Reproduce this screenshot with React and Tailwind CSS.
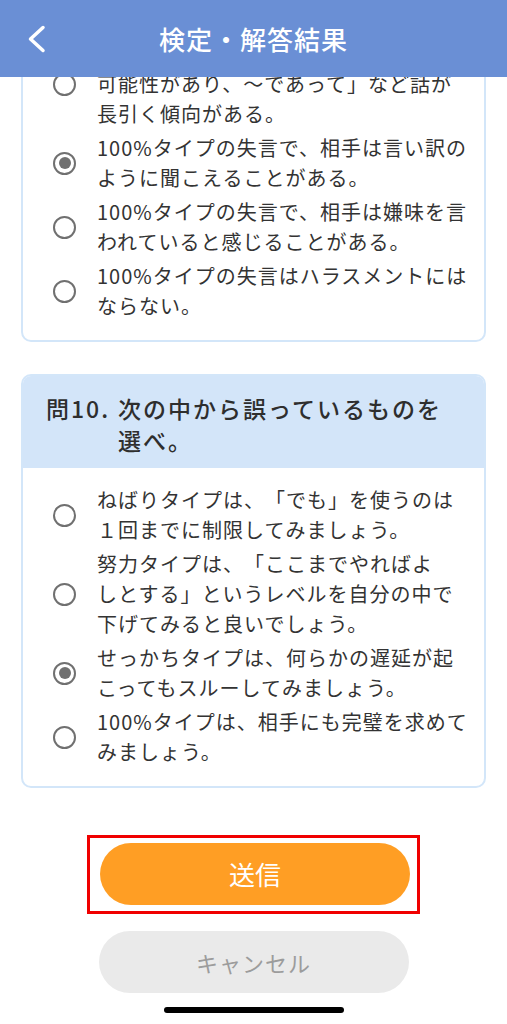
import React from "react";

// Quiz result screen: two question cards (first one scrolled under the header)
// followed by the send / cancel buttons.

const PREV_OPTIONS = [
  {
    lines: ["100%タイプの失言は、「～という", "可能性があり、～であって」など話が", "長引く傾向がある。"],
    checked: false,
  },
  {
    lines: ["100%タイプの失言で、相手は言い訳の", "ように聞こえることがある。"],
    checked: true,
  },
  {
    lines: ["100%タイプの失言で、相手は嫌味を言", "われていると感じることがある。"],
    checked: false,
  },
  {
    lines: ["100%タイプの失言はハラスメントには", "ならない。"],
    checked: false,
  },
];

const Q10_OPTIONS = [
  {
    lines: ["ねばりタイプは、「でも」を使うのは", "１回までに制限してみましょう。"],
    checked: false,
  },
  {
    lines: ["努力タイプは、「ここまでやればよ", "しとする」というレベルを自分の中で", "下げてみると良いでしょう。"],
    checked: false,
  },
  {
    lines: ["せっかちタイプは、何らかの遅延が起", "こってもスルーしてみましょう。"],
    checked: true,
  },
  {
    lines: ["100%タイプは、相手にも完璧を求めて", "みましょう。"],
    checked: false,
  },
];

function Radio({ checked }) {
  return (
    <span className="w-[23px] h-[23px] shrink-0 rounded-full border-[2.5px] border-[#707070] flex items-center justify-center">
      {checked && <span className="w-[12px] h-[12px] rounded-full bg-[#707070]" />}
    </span>
  );
}

function OptionList({ options }) {
  return (
    <div className="flex flex-col gap-[4px] pt-[17px] pb-[19px]">
      {options.map((opt, i) => (
        <label key={i} className="flex items-center pl-[30px] pr-[8px] gap-[21px]">
          <Radio checked={opt.checked} />
          <span className="flex flex-col text-[20px] leading-[30px] tracking-[1px] text-[#333333]">
            {opt.lines.map((line, j) => (
              <span key={j} className="whitespace-nowrap">{line}</span>
            ))}
          </span>
        </label>
      ))}
    </div>
  );
}

export default function App() {
  return (
    <div className="h-[1024px] w-full bg-white overflow-hidden flex flex-col font-['Noto_Sans_CJK_JP','Noto_Sans',sans-serif] [text-spacing-trim:space-all]">

      {/* ── HEADER ── */}
      <header className="relative z-10 h-[77px] shrink-0 bg-[#6a8fd5] grid grid-cols-[60px_1fr_60px] items-center">
        <div className="pl-[27px] pt-[1px] flex items-center">
          <svg width="20" height="28" viewBox="0 0 20 28" fill="none">
            <polyline
              points="16,2.5 3.5,14 16,25.5"
              stroke="white"
              strokeWidth="3.5"
              strokeLinecap="round"
              strokeLinejoin="round"
            />
          </svg>
        </div>
        <h1 className="text-center text-white text-[26px] font-medium tracking-[1px] leading-none">
          検定・解答結果
        </h1>
        <div />
      </header>

      {/* ── CONTENT (scrolled, first card partly under the header) ── */}
      <main className="flex-1 -mt-[57px] flex flex-col">

        {/* previous question — only the options are visible */}
        <section className="mx-[21px] rounded-[10px] border-2 border-[#d3e6f9] bg-white">
          <OptionList options={PREV_OPTIONS} />
        </section>

        {/* question 10 */}
        <section className="mx-[21px] mt-[32px] rounded-[10px] border-2 border-[#d3e6f9] bg-white overflow-hidden">
          <div className="bg-[#d3e5f9] pl-[23px] pr-[8px] pt-[16px] pb-[12px] flex gap-[8px] text-[23px] leading-[32px] tracking-[2px] font-medium text-[#2e2e2e]">
            <span className="whitespace-nowrap">問10.</span>
            <span className="flex flex-col">
              <span className="whitespace-nowrap">次の中から誤っているものを</span>
              <span className="whitespace-nowrap">選べ。</span>
            </span>
          </div>
          <OptionList options={Q10_OPTIONS} />
        </section>

        {/* ── BUTTONS ── */}
        <div className="flex flex-col items-center mt-[47px]">
          <div className="w-[333px] border-[3px] border-[#f00000] pt-[5px] pb-[6px] pl-[10px] pr-[7px]">
            <button className="w-[310px] h-[62px] rounded-full bg-[#ff9e24] text-white text-[26px] leading-none">
              送信
            </button>
          </div>
          <button className="mt-[17px] w-[310px] h-[62px] rounded-full bg-[#eaeaea] text-[#9c9c9c] text-[22px] tracking-[1px] leading-none">
            キャンセル
          </button>
          <div className="mt-[14px] w-[180px] h-[6px] rounded-full bg-black" />
        </div>
      </main>
    </div>
  );
}
